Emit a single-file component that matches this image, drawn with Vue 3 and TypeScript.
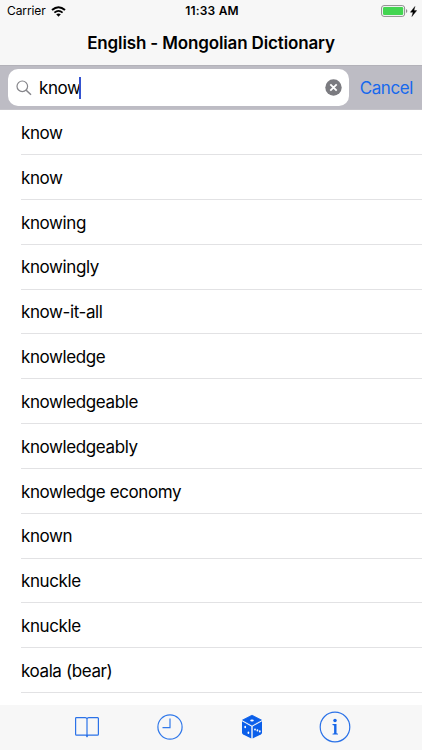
<script setup lang="ts">
import { ref } from 'vue'

const query = ref<string>('know')
const words: string[] = [
  'know', 'know', 'knowing', 'knowingly', 'know-it-all', 'knowledge', 'knowledgeable',
  'knowledgeably', 'knowledge economy', 'known', 'knuckle', 'knuckle', 'koala (bear)',
]
</script>

<template>
  <div class="screen">
    <header class="top">
      <div class="status">
        <div class="side">
          <span class="carrier">Carrier</span>
          <svg class="wifi" width="15" height="11" viewBox="0 0 15 11" fill="none" stroke="#000">
            <path d="M1 4.1Q7.5-1.6 14 4.1" stroke-width="2" />
            <path d="M3.4 6.6Q7.5 3.1 11.6 6.6" stroke-width="1.8" />
            <path d="M5.2 8.3Q7.5 6.5 9.8 8.3L7.5 10.7Z" fill="#000" stroke="none" />
          </svg>
        </div>
        <span class="time">11:33 AM</span>
        <div class="side right">
          <svg width="27" height="12" viewBox="0 0 27 12">
            <rect x=".6" y=".6" width="23" height="10.8" rx="2.4" fill="#fbfbfb" stroke="#8c8c8c" />
            <rect x="2" y="2" width="20.2" height="8" rx="1.2" fill="#43d551" />
            <path d="M25 4v4q1.3-.6 1.3-2T25 4Z" fill="#8c8c8c" />
          </svg>
          <svg class="bolt" width="7" height="11" viewBox="0 0 7 11">
            <path d="M4.9.5.4 6.2h2.7L1.9 10.5 6.7 4.6H3.9Z" fill="#000" stroke="#000" stroke-width=".4" />
          </svg>
        </div>
      </div>
      <h1 class="title">English - Mongolian Dictionary</h1>
    </header>

    <div class="search">
      <div class="field">
        <svg class="glass" width="16" height="16" viewBox="0 0 16 16" fill="none" stroke="#85858a" stroke-width="1.2">
          <circle cx="6.3" cy="6.3" r="5.3" />
          <path d="m10.2 10.2 4.8 4.6" stroke-width="1.5" />
        </svg>
        <span class="query">{{ query }}</span>
        <span class="caret"></span>
        <svg class="clear" width="17" height="17" viewBox="0 0 17 17">
          <circle cx="8.5" cy="8.5" r="8.2" fill="#7b7b80" />
          <path d="m5.3 5.3 6.4 6.4m0-6.4-6.4 6.4" stroke="#fff" stroke-width="1.8" />
        </svg>
      </div>
      <span class="cancel">Cancel</span>
    </div>

    <ul class="list">
      <li v-for="(word, i) in words" :key="i" class="row"><span>{{ word }}</span></li>
    </ul>

    <nav class="tabs">
      <div class="tab">
        <svg width="26" height="24" viewBox="0 0 26 24" fill="none" stroke="#2b72e8" stroke-width="1.2">
          <path d="M13 20.8V3.8Q12.6 2.6 11.3 2.6H2.4Q1.6 2.6 1.6 3.4V19.2Q1.6 20.2 2.6 20.2H11.6Q13 20.2 13 21.6Q13 20.2 14.4 20.2H23.4Q24.4 20.2 24.4 19.2V3.4Q24.4 2.6 23.6 2.6H14.7Q13.4 2.6 13 3.8" />
          <path d="M12 20.5h2l-.5 1.8h-1Z" fill="#2b72e8" stroke="none" />
        </svg>
      </div>
      <div class="tab">
        <svg width="26" height="26" viewBox="0 0 26 26" fill="none" stroke="#3179ea" stroke-width="1.2">
          <circle cx="13" cy="13" r="12.1" />
          <path d="M13 4.5v9.2H5.5" />
        </svg>
      </div>
      <div class="tab">
        <svg width="22" height="26" viewBox="0 0 22 26">
          <path d="M11 1.2 20.4 6 11 11.2 1.6 6Z" fill="#0b5fea" stroke="#0b5fea" stroke-width=".8" stroke-linejoin="round" />
          <path d="M1 7.3 10.3 12.4V24.5L2.2 20.4Q1 19.7 1 18.4Z" fill="#0b5fea" />
          <path d="M21 7.3 11.7 12.4V24.5L19.8 20.4Q21 19.7 21 18.4Z" fill="#0b5fea" />
          <g fill="#fff">
            <ellipse cx="11" cy="6.4" rx="1.8" ry="1" />
            <ellipse cx="4.2" cy="13" rx=".9" ry="1.2" />
            <ellipse cx="7.4" cy="18.8" rx=".9" ry="1.2" />
            <ellipse cx="14" cy="15.5" rx=".9" ry="1.1" />
            <ellipse cx="16.4" cy="16.4" rx=".9" ry="1.1" />
            <ellipse cx="18.8" cy="17.4" rx=".9" ry="1.1" />
          </g>
        </svg>
      </div>
      <div class="tab">
        <svg width="32" height="32" viewBox="0 0 32 32">
          <circle cx="16" cy="16" r="14.8" fill="none" stroke="#2b72e8" stroke-width="1.2" />
          <circle cx="16" cy="9.6" r="1.75" fill="#1766e8" />
          <path d="M13.5 13.1h4v9.1l1.5.5v.8h-5.5v-.8l1.6-.5v-7.6l-1.6-.5Z" fill="#1766e8" />
        </svg>
      </div>
    </nav>
  </div>
</template>

<style>
body {
  margin: 0;
  overflow: hidden;
}
</style>

<style scoped>
.screen {
  display: flex;
  flex-direction: column;
  width: 422px;
  height: 750px;
  overflow: hidden;
  background: #fff;
  color: #000;
  font-family: Inter, "Liberation Sans", sans-serif;
}
.top {
  flex: none;
  height: 65px;
  background: #f7f7f7;
}
.status {
  display: flex;
  align-items: center;
  height: 22px;
  padding: 0 5px 0 7px;
  font-size: 12px;
  line-height: 22px;
}
.carrier {
  letter-spacing: -0.1px;
}
.side {
  display: flex;
  flex: 1;
  align-items: center;
}
.right {
  justify-content: flex-end;
}
.wifi {
  margin-left: 5px;
}
.bolt {
  margin-left: 2px;
}
.time {
  font-weight: 600;
  letter-spacing: 0.2px;
}
.title {
  margin: 0;
  font-size: 17px;
  font-weight: 600;
  line-height: 43px;
  letter-spacing: -0.14px;
  text-align: center;
}
.search {
  display: flex;
  flex: none;
  align-items: center;
  box-sizing: border-box;
  height: 45px;
  padding: 0 9px 0 8px;
  background: #bdbcc4;
  border-top: 1px solid #b3b2b9;
  border-bottom: 1px solid #c5c4ca;
}
.field {
  display: flex;
  align-items: center;
  box-sizing: border-box;
  width: 341px;
  height: 37px;
  padding: 0 7px 0 8px;
  background: #fff;
  border-radius: 10px;
}
.query {
  margin-left: 7px;
  font-size: 17px;
  letter-spacing: -0.4px;
}
.caret {
  width: 2px;
  height: 22px;
  margin-left: -1.5px;
  background: #3453d0;
}
.clear {
  margin-left: auto;
}
.cancel {
  margin-left: auto;
  color: #1769ed;
  font-size: 17px;
  letter-spacing: -0.4px;
}
.list {
  flex: 1;
  min-height: 0;
  margin: 0;
  padding: 0.4px 0 0 21px;
  overflow: hidden;
  list-style: none;
}
.row {
  display: flex;
  align-items: center;
  box-sizing: border-box;
  height: 44.82px;
  padding-top: 1.5px;
  border-bottom: 1px solid #e2e2e4;
  font-size: 17px;
  letter-spacing: -0.4px;
}
.tabs {
  display: flex;
  flex: none;
  box-sizing: border-box;
  height: 45px;
  padding: 0 46px 1px;
  background: #f7f7f7;
}
.tab {
  display: flex;
  flex: 1;
  align-items: center;
  justify-content: center;
}
</style>
